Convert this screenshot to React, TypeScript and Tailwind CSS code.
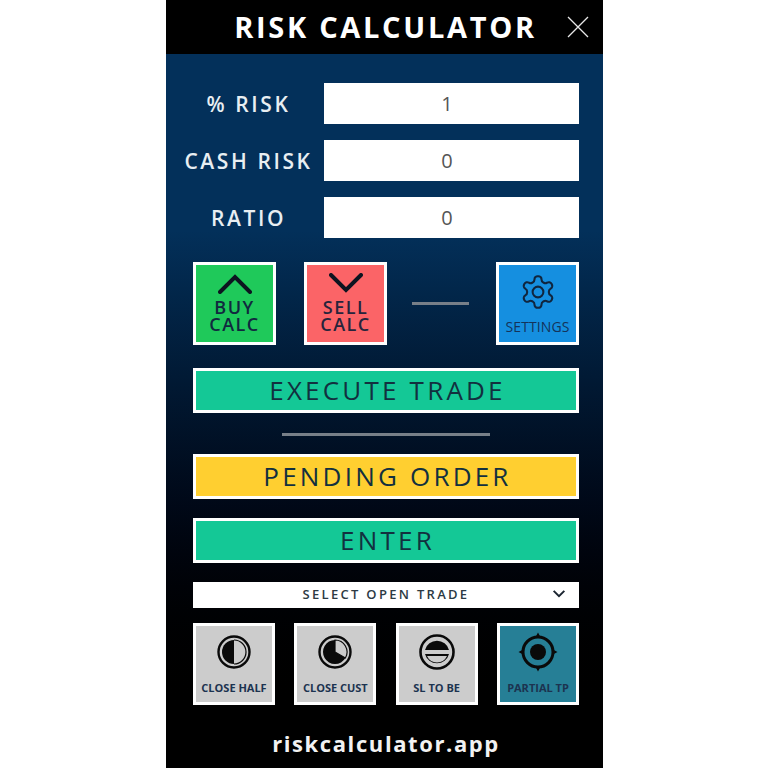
import { ReactNode } from "react"

const font = { fontFamily: '"Open Sans", "Noto Sans", sans-serif' }

function Field({ label, value }: { label: string; value: string }) {
  return (
    <div className="flex items-center h-[41px] ml-[-13px]">
      <div className="w-[137px] shrink-0 mr-[7px] pt-[3px] text-center text-[21px] font-semibold tracking-[2.6px] text-[#e8eef2] whitespace-nowrap">{label}</div>
      <div className="w-[255px] shrink-0 h-full bg-white flex items-center justify-center pr-[9px] text-[20px] text-[#555]">{value}</div>
    </div>
  )
}

function SquareButton({ bg, children }: { bg: string; children: ReactNode }) {
  return (
    <div className={`w-[83px] h-[83px] shrink-0 border-[3px] border-white flex flex-col items-center ${bg}`}>{children}</div>
  )
}

function WideButton({ bg, label }: { bg: string; label: string }) {
  return (
    <div className={`h-[45px] border-[3px] border-white flex items-center justify-center pl-[3px] text-[26px] tracking-[3.2px] text-[#12303f] ${bg}`}>
      {label}
    </div>
  )
}

function SmallButton({ bg = "bg-[#cccccc]", label, icon }: { bg?: string; label: string; icon: ReactNode }) {
  return (
    <div className={`w-[82px] h-[82px] border-[3px] border-white flex flex-col items-center ${bg}`}>
      <svg viewBox="0 0 40 40" className="w-[40px] h-[40px] mt-[6px]">{icon}</svg>
      <div className="mt-[10px] text-[11px] leading-none font-bold text-[#1c3350] whitespace-nowrap">{label}</div>
    </div>
  )
}

export default function App() {
  return (
    <div className="w-[768px] h-[768px] bg-white flex justify-center" style={font}>
      <div className="w-[437px] h-full ml-[1px] flex flex-col bg-gradient-to-b from-[#03305a] from-[30%] to-[#000000] to-[94%]">
        {/* Title bar */}
        <div className="relative h-[54px] bg-black flex items-center justify-center pl-[2px]">
          <span className="text-[29px] font-bold tracking-[2.7px] text-white">RISK CALCULATOR</span>
          <svg viewBox="0 0 22 22" className="absolute right-[14px] top-[16px] w-[22px] h-[22px]" stroke="#e8e8e8" strokeWidth="1.3">
            <path d="M1 1 L21 21 M21 1 L1 21" />
          </svg>
        </div>

        <div className="flex-1 flex flex-col pl-[27px] pr-[24px]">
          <div className="mt-[29px] flex flex-col gap-[16px]">
            <Field label="% RISK" value="1" />
            <Field label="CASH RISK" value="0" />
            <Field label="RATIO" value="0" />
          </div>

          {/* Calc buttons */}
          <div className="mt-[24px] flex items-center">
            <SquareButton bg="bg-[#1fc95a]">
              <svg viewBox="0 0 34 20" className="w-[34px] h-[20px] mt-[9px]" fill="none" stroke="#0d1420" strokeWidth="4" strokeLinecap="round">
                <path d="M2 18 L17 3 L32 18" />
              </svg>
              <div className="mt-[5px] text-[18px] leading-[17px] font-semibold tracking-[1.5px] text-[#11293f] text-center">BUY<br />CALC</div>
            </SquareButton>
            <div className="w-[28px] shrink-0" />
            <SquareButton bg="bg-[#fb6467]">
              <svg viewBox="0 0 34 20" className="w-[34px] h-[20px] mt-[8px]" fill="none" stroke="#0d1420" strokeWidth="4" strokeLinecap="round">
                <path d="M2 2 L17 17 L32 2" />
              </svg>
              <div className="mt-[6px] text-[18px] leading-[17px] font-semibold tracking-[1.5px] text-[#27243c] text-center">SELL<br />CALC</div>
            </SquareButton>
            <div className="w-[57px] h-[3px] shrink-0 bg-[#777f88] ml-[25px] mr-[27px]" />
            <SquareButton bg="bg-[#158fe0]">
              <svg viewBox="0 0 24 24" className="w-[38px] h-[38px] mt-[8px]" fill="none" stroke="#10263f" strokeWidth="1.3" strokeLinecap="round" strokeLinejoin="round">
                <path d="M12.22 2h-.44a2 2 0 0 0-2 2v.18a2 2 0 0 1-1 1.73l-.43.25a2 2 0 0 1-2 0l-.15-.08a2 2 0 0 0-2.73.73l-.22.38a2 2 0 0 0 .73 2.73l.15.1a2 2 0 0 1 1 1.72v.51a2 2 0 0 1-1 1.74l-.15.09a2 2 0 0 0-.73 2.73l.22.38a2 2 0 0 0 2.73.73l.15-.08a2 2 0 0 1 2 0l.43.25a2 2 0 0 1 1 1.73V20a2 2 0 0 0 2 2h.44a2 2 0 0 0 2-2v-.18a2 2 0 0 1 1-1.73l.43-.25a2 2 0 0 1 2 0l.15.08a2 2 0 0 0 2.73-.73l.22-.39a2 2 0 0 0-.73-2.73l-.15-.08a2 2 0 0 1-1-1.74v-.5a2 2 0 0 1 1-1.74l.15-.09a2 2 0 0 0 .73-2.73l-.22-.38a2 2 0 0 0-2.73-.73l-.15.08a2 2 0 0 1-2 0l-.43-.25a2 2 0 0 1-1-1.73V4a2 2 0 0 0-2-2z" />
                <circle cx="12" cy="12" r="3.4" />
              </svg>
              <div className="mt-[9px] text-[14px] leading-none text-[#14335a] tracking-[0.1px]">SETTINGS</div>
            </SquareButton>
          </div>

          <div className="mt-[23px]">
            <WideButton bg="bg-[#14c896]" label="EXECUTE TRADE" />
          </div>
          <div className="mt-[20px] mx-auto w-[208px] h-[3px] bg-[#777f88]" />
          <div className="mt-[18px]">
            <WideButton bg="bg-[#ffcf30]" label="PENDING ORDER" />
          </div>
          <div className="mt-[19px]">
            <WideButton bg="bg-[#14c896]" label="ENTER" />
          </div>

          {/* Trade select */}
          <div className="relative mt-[19px] h-[26px] bg-white flex items-center justify-center text-[13px] font-semibold tracking-[2.3px] text-[#2c3a44]">
            SELECT OPEN TRADE
            <svg viewBox="0 0 14 9" className="absolute right-[13px] top-[8px] w-[14px] h-[8px]" fill="none" stroke="#1a2430" strokeWidth="2.2">
              <path d="M1 1 L7 7 L13 1" />
            </svg>
          </div>

          {/* Trade actions */}
          <div className="mt-[15px] flex justify-between">
            <SmallButton
              label="CLOSE HALF"
              icon={<>
                <circle cx="20" cy="20" r="15.5" fill="none" stroke="#0a0a0a" strokeWidth="2.4" />
                <path d="M20 8 A12 12 0 0 0 20 32 Z" fill="#0a0a0a" />
                <path d="M20 8 A12 12 0 0 1 20 32" fill="none" stroke="#0a0a0a" strokeWidth="1.2" />
              </>}
            />
            <SmallButton
              label="CLOSE CUST"
              icon={<>
                <circle cx="20" cy="20" r="15.5" fill="none" stroke="#0a0a0a" strokeWidth="2.4" />
                <path d="M20 8 A12 12 0 1 0 30.4 26 L20 20 Z" fill="#0a0a0a" />
                <path d="M20 8 A12 12 0 0 1 30.4 26 L20 20 Z" fill="none" stroke="#0a0a0a" strokeWidth="1.2" />
              </>}
            />
            <SmallButton
              label="SL TO BE"
              icon={<>
                <circle cx="20" cy="20" r="16.5" fill="none" stroke="#0a0a0a" strokeWidth="2.6" />
                <path d="M8 18 A12.4 12.4 0 0 1 32 18 Z" fill="#0a0a0a" />
                <path d="M8 22 A12.4 12.4 0 0 0 32 22 Z" fill="#0a0a0a" />
                <path d="M10 24 A11 11 0 0 0 30 24 Z" fill="#cccccc" />
              </>}
            />
            <SmallButton
              bg="bg-[#267f96]"
              label="PARTIAL TP"
              icon={<>
                <circle cx="20" cy="20" r="15" fill="none" stroke="#0a0a0a" strokeWidth="3" />
                <circle cx="20" cy="20" r="8" fill="#0a0a0a" />
                <path d="M20 0.5 L23 6 L17 6 Z M20 39.5 L23 34 L17 34 Z M0.5 20 L6 17 L6 23 Z M39.5 20 L34 17 L34 23 Z" fill="#0a0a0a" />
              </>}
            />
          </div>

          <div className="mt-[23px] text-center text-[22px] leading-[30px] font-bold tracking-[1.6px] text-[#f2f2f2]">riskcalculator.app</div>
        </div>
      </div>
    </div>
  )
}
